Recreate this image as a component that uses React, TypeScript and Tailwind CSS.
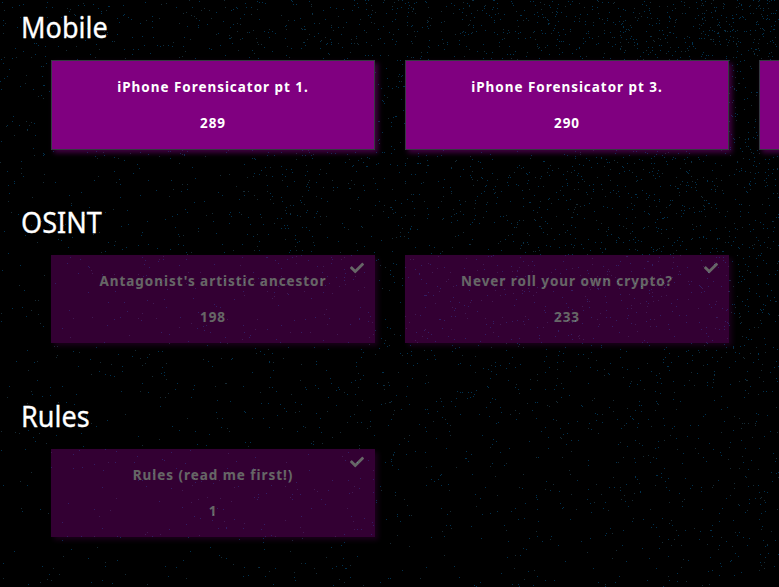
import React from "react";
import { FaCheck } from "react-icons/fa";

type Challenge = { name: string; points: number; solved?: boolean };
type Category = { title: string; challenges: Challenge[] };

const categories: Category[] = [
  {
    title: "Mobile",
    challenges: [
      { name: "iPhone Forensicator pt 1.", points: 289 },
      { name: "iPhone Forensicator pt 3.", points: 290 },
      { name: "", points: 0 },
    ],
  },
  {
    title: "OSINT",
    challenges: [
      { name: "Antagonist's artistic ancestor", points: 198, solved: true },
      { name: "Never roll your own crypto?", points: 233, solved: true },
    ],
  },
  {
    title: "Rules",
    challenges: [{ name: "Rules (read me first!)", points: 1, solved: true }],
  },
];

// Seeded generator so the star field is the same on every load.
function starField() {
  let seed = 20231;
  const random = () => {
    seed = (seed + 0x6d2b79f5) | 0;
    let t = Math.imul(seed ^ (seed >>> 15), 1 | seed);
    t = (t + Math.imul(t ^ (t >>> 7), 61 | t)) ^ t;
    return ((t ^ (t >>> 14)) >>> 0) / 4294967296;
  };
  let bright = "";
  let dim = "";
  for (let i = 0; i < 26000; i++) {
    const x = Math.floor(random() * 779);
    const y = Math.floor(random() * 587);
    const fx = x / 779;
    const fy = 1 - y / 587;
    const density = 0.05 + 0.17 * fx * (0.4 + fy) + 0.1 * fy * fy + 0.4 * Math.pow(fx * fy, 2);
    const keep = random() < density;
    const isDim = random() < 0.3;
    if (!keep) continue;
    if (isDim) dim += `M${x} ${y}h1v1h-1z`;
    else bright += `M${x} ${y}h1v1h-1z`;
  }
  return { bright, dim };
}

const stars = starField();

function Card({ name, points, solved }: Challenge) {
  return (
    <div
      className={
        "relative w-[324px] shrink-0 bg-[#800080] text-center text-sm font-bold tracking-[1px] text-white shadow-[3px_3px_5px_rgba(128,0,128,0.5)] " +
        (solved ? "h-[88px] pt-4 opacity-40" : "h-[90px] border border-[#343a40] pt-4")
      }
    >
      {solved && <FaCheck className="absolute top-[6px] right-[11px] size-[14px]" />}
      {name && (
        <div className="scale-x-[0.963]">
          <p className="mb-4 h-5 leading-5">{name}</p>
          <p className="h-5 leading-5">{points}</p>
        </div>
      )}
    </div>
  );
}

export default function App() {
  return (
    <div className="relative h-[587px] w-[779px] overflow-hidden bg-black font-['Noto_Sans','Open_Sans',sans-serif]">
      <svg className="absolute inset-0" width="779" height="587" shapeRendering="crispEdges">
        <path d={stars.bright} fill="#003250" />
        <path d={stars.dim} fill="#172b34" />
      </svg>
      <main className="relative flex flex-col gap-[55px] pt-[10px]">
        {categories.map((category) => (
          <section key={category.title} className="even:pb-px">
            <h3 className="mb-[14px] ml-[20.6px] h-9 origin-left scale-x-[0.917] text-[29.5px] leading-[34px] text-white [-webkit-text-stroke:0.3px_white]">
              {category.title}
            </h3>
            <div className="flex gap-[30px] pl-[51px]">
              {category.challenges.map((challenge, i) => (
                <Card key={i} {...challenge} />
              ))}
            </div>
          </section>
        ))}
      </main>
    </div>
  );
}
